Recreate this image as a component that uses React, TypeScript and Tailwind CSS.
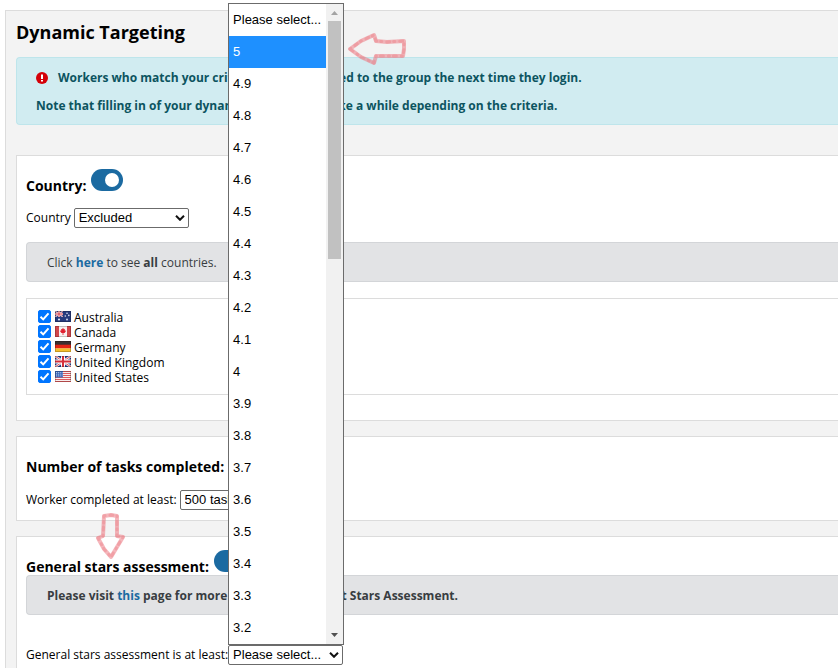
import type { ReactNode } from "react";

const ratings = [
  "5", "4.9", "4.8", "4.7", "4.6", "4.5", "4.4", "4.3", "4.2", "4.1",
  "4", "3.9", "3.8", "3.7", "3.6", "3.5", "3.4", "3.3", "3.2",
];

const countries = [
  { code: "au", name: "Australia" },
  { code: "ca", name: "Canada" },
  { code: "de", name: "Germany" },
  { code: "gb", name: "United Kingdom" },
  { code: "us", name: "United States" },
];

const UnionJack = () => (
  <>
    <rect width="16" height="11" fill="#2b3f8c" />
    <path d="M0 0L16 11M16 0L0 11" stroke="#f4f1f4" strokeWidth="2.4" />
    <path d="M0 0L16 11M16 0L0 11" stroke="#d8404c" strokeWidth="0.9" />
    <path d="M8 0V11M0 5.5H16" stroke="#fff" strokeWidth="4" />
    <path d="M8 0V11M0 5.5H16" stroke="#d6303c" strokeWidth="2" />
  </>
);

const Flag = ({ code }: { code: string }) => (
  <svg viewBox="0 0 16 11" className="h-[11px] w-4 shrink-0" aria-hidden="true">
    {code === "au" && (
      <>
        <rect width="16" height="11" fill="#263a7c" />
        <svg width="8" height="6" viewBox="0 0 16 11" preserveAspectRatio="none">
          <UnionJack />
        </svg>
        <g fill="#dfe5f5">
          <circle cx="4" cy="8.5" r="1.1" />
          <circle cx="12" cy="2.2" r="0.8" />
          <circle cx="10.3" cy="5" r="0.8" />
          <circle cx="13.8" cy="4.4" r="0.8" />
          <circle cx="12" cy="8.5" r="0.9" />
        </g>
      </>
    )}
    {code === "ca" && (
      <>
        <rect width="16" height="11" fill="#f7f0f0" />
        <path d="M0 0H4V11H0ZM12 0H16V11H12Z" fill="#d2474c" />
        <path
          d="M8 1.8L8.9 3.3L10 3L9.7 4.4L11.2 4.8L9.6 6.9L8.4 7V9H7.6V7L6.4 6.9L4.8 4.8L6.3 4.4L6 3L7.1 3.3Z"
          fill="#e02030"
        />
      </>
    )}
    {code === "de" && (
      <>
        <rect width="16" height="4" fill="#3c3030" />
        <rect y="3.7" width="16" height="3.8" fill="#e32414" />
        <rect y="7.4" width="16" height="3.6" fill="#f5bf2c" />
      </>
    )}
    {code === "gb" && <UnionJack />}
    {code === "us" && (
      <>
        <rect width="16" height="11" fill="#f8eeee" />
        <path
          d="M0 .5H16M0 2.5H16M0 4.5H16M0 6.5H16M0 8.5H16M0 10.5H16"
          stroke="#dc5a5c"
          strokeWidth="1"
        />
        <rect width="8" height="6.5" fill="#3a66b8" />
        <path d="M1 1.5H8M1 3.2H8M1 4.9H8" stroke="#e4ecfa" strokeWidth="0.8" strokeDasharray="0.9 1" />
      </>
    )}
    <rect x="0.5" y="0.5" width="15" height="10" fill="none" stroke="#000" strokeOpacity="0.2" />
  </svg>
);

const Toggle = ({ label }: { label: string }) => (
  <label className="relative block h-[22px] w-8 shrink-0 cursor-pointer">
    <input type="checkbox" role="switch" defaultChecked aria-label={label} className="peer sr-only" />
    <span className="block h-[22px] w-8 rounded-full bg-gray-400 peer-checked:bg-[#1b6aa1]" />
    <span className="absolute top-1 right-1 size-[14px] rounded-full bg-white" />
  </label>
);

type SelectProps = { id: string; options: string[] };

const Select = ({ id, options }: SelectProps) => (
  <span className="relative block w-[115px]">
    <select
      id={id}
      className="block h-5 w-full appearance-none rounded-xs border border-[#6b6b6b] bg-white pl-1 font-['Liberation_Sans',sans-serif] text-[13px] leading-[18px] text-black"
    >
      {options.map((option) => (
        <option key={option}>{option}</option>
      ))}
    </select>
    <svg
      viewBox="0 0 10 6"
      className="pointer-events-none absolute top-[7px] right-1 h-[6px] w-[10px]"
      fill="none"
      stroke="#111"
      strokeWidth="2"
    >
      <path d="M1 0.8L5 4.8L9 0.8" />
    </svg>
  </span>
);

const Card = ({ className, children }: { className: string; children: ReactNode }) => (
  <section className={`border-t border-l border-[#dcdcdc] bg-white pl-[9px] ${className}`}>
    {children}
  </section>
);

const Note = ({ children }: { children: ReactNode }) => (
  <div className="h-10 rounded-l border border-r-0 border-[#d3d5d8] bg-[#e2e3e5] pt-[10px] pl-5 text-[#383d41]">
    <p>{children}</p>
  </div>
);

const RatingList = () => (
  <div className="absolute bottom-full left-0 z-10 flex w-[116px] border border-[#6b6b6b] bg-white font-['Liberation_Sans',sans-serif] text-[13px] text-black">
    <ul role="listbox" aria-label="General stars assessment" className="flex-1">
      <li role="option" aria-selected="false" className="h-8 pl-1 leading-8 whitespace-nowrap">
        Please select...
      </li>
      {ratings.map((rating) => (
        <li
          key={rating}
          role="option"
          aria-selected={rating === "5"}
          className="h-8 pl-1 leading-8 aria-selected:bg-[#1e90ff] aria-selected:text-white"
        >
          {rating}
        </li>
      ))}
    </ul>
    <div className="flex w-[17px] shrink-0 flex-col items-center bg-[#f1f1f1]">
      <svg viewBox="0 0 17 17" className="size-[17px]" fill="#a3a3a3">
        <path d="M5 11L8.5 7L12 11Z" />
      </svg>
      <div className="h-[238px] w-[13px] bg-[#c1c1c1]" />
      <svg viewBox="0 0 17 17" className="mt-auto size-[17px]" fill="#505050">
        <path d="M5 6L8.5 10L12 6Z" />
      </svg>
    </div>
  </div>
);

// Hand drawn marker arrow: a wide soft stroke with a rough one on top
const MarkerArrow = ({ className, viewBox, d }: { className: string; viewBox: string; d: string }) => (
  <svg
    viewBox={viewBox}
    className={`pointer-events-none absolute z-20 ${className}`}
    fill="none"
    stroke="#ec7c85"
    strokeLinejoin="round"
    strokeLinecap="round"
    aria-hidden="true"
  >
    <path d={d} strokeWidth="4" strokeOpacity="0.55" />
    <path d={d} strokeWidth="3" strokeOpacity="0.4" strokeDasharray="1 5 3 4" />
  </svg>
);

const App = () => {
  return (
    <main className="relative flex min-h-screen flex-col overflow-hidden bg-white pt-[10px] pl-[5px] font-['Open_Sans',sans-serif] text-xs leading-5 text-black">
      <div className="flex flex-1 flex-col border-t border-l border-[#dcdcdc] bg-[#f3f3f3] pl-[10px]">
        <h1 className="mt-[9px] text-lg leading-6 font-bold">Dynamic Targeting</h1>

        <div className="mt-[13px] h-[68px] rounded-l border border-r-0 border-[#bee5eb] bg-[#d1ecf1] pt-[10px] pl-[19px] font-bold whitespace-nowrap text-[#0c5460]">
          <p className="flex items-center">
            <svg viewBox="0 0 12 12" className="mr-[10px] size-3" aria-hidden="true">
              <circle cx="6" cy="6" r="6" fill="#d40008" />
              <path d="M5 2.5H7V7H5ZM5 8H7V9.6H5Z" fill="#fff" />
            </svg>
            Workers who match your criteria will be assigned to the group the next time they login.
          </p>
          <p className="mt-2">
            Note that filling in of your dynamic group might take a while depending on the criteria.
          </p>
        </div>

        <Card className="mt-[30px] border-b pb-[25px]">
          <div className="mt-[13px] flex gap-[5px]">
            <h2 className="mt-[7px] text-sm leading-5 font-bold">Country:</h2>
            <Toggle label="Country" />
          </div>
          <div className="mt-3 flex items-center gap-[3px]">
            <label htmlFor="country">Country</label>
            <Select id="country" options={["Excluded", "Included"]} />
          </div>
          <div className="mt-[14px]">
            <Note>
              Click <a href="#countries" className="font-bold text-[#1b6aa1]">here</a> to see <b>all</b> countries.
            </Note>
          </div>
          <ul className="mt-4 border border-r-0 border-[#dcdcdc] pt-[10px] pb-[10px] pl-[11px]">
            {countries.map(({ code, name }) => (
              <li key={code} className="h-[15px]">
                <label className="flex h-[15px] items-center">
                  <span className="relative mr-1 block size-[13px]">
                    <input
                      type="checkbox"
                      defaultChecked
                      className="block size-[13px] appearance-none rounded-xs border border-gray-500 checked:border-[#0075ff] checked:bg-[#0075ff]"
                    />
                    <svg viewBox="0 0 13 13" className="pointer-events-none absolute inset-0" fill="none" stroke="#fff" strokeWidth="2">
                      <path d="M2.5 6.8L5.2 9.4L10.5 3.4" />
                    </svg>
                  </span>
                  <Flag code={code} />
                  <span className="pt-[2px] pl-[3px]">{name}</span>
                </label>
              </li>
            ))}
          </ul>
        </Card>

        <Card className="mt-[15px] border-b pb-[10px]">
          <h2 className="mt-5 text-sm leading-5 font-bold">Number of tasks completed:</h2>
          <div className="mt-[13px] flex items-center gap-[3px]">
            <label htmlFor="tasks">Worker completed at least:</label>
            <Select id="tasks" options={["500 tasks", "1000 tasks"]} />
          </div>
        </Card>

        <Card className="mt-[15px] flex-1">
          <div className="mt-[13px] flex h-[25px] gap-[5px]">
            <h2 className="mt-[7px] text-sm leading-5 font-bold">General stars assessment:</h2>
            <Toggle label="General stars assessment" />
          </div>
          <div className="font-bold whitespace-nowrap">
            <Note>
              Please visit <a href="#stars" className="text-[#1b6aa1]">this</a> page for more explanations about Stars Assessment.
            </Note>
          </div>
          <div className="mt-[30px] flex items-center">
            <label htmlFor="stars">General stars assessment is at least:</label>
            <div className="relative">
              <Select id="stars" options={["Please select...", ...ratings]} />
              <RatingList />
            </div>
          </div>
        </Card>
      </div>

      <MarkerArrow
        className="top-8 left-[347px] h-[34px] w-[60px]"
        viewBox="0 0 60 34"
        d="M3 17L14 9L27 3L29 9L40 10L57 9L57 17L56 24L29 24L27 31L14 25Z"
      />
      <MarkerArrow
        className="top-[512px] left-[95px] h-12 w-[30px]"
        viewBox="0 0 30 48"
        d="M9 4L16 3L22 4L22 24L28 25L22 35L16 45L9 37L3 26L8 24Z"
      />
    </main>
  );
};

export default App;
